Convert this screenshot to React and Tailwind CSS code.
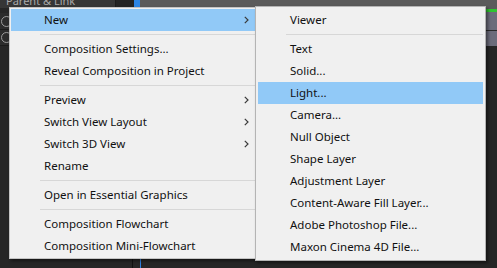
import React from 'react';

const mainItems = [
    { label: 'New', arrow: true, active: true },
    'sep',
    { label: 'Composition Settings...' },
    { label: 'Reveal Composition in Project' },
    'sep',
    { label: 'Preview', arrow: true },
    { label: 'Switch View Layout', arrow: true },
    { label: 'Switch 3D View', arrow: true },
    { label: 'Rename' },
    'sep',
    { label: 'Open in Essential Graphics' },
    'sep',
    { label: 'Composition Flowchart' },
    { label: 'Composition Mini-Flowchart' },
];

const newItems = [
    { label: 'Viewer' },
    'sep',
    { label: 'Text' },
    { label: 'Solid...' },
    { label: 'Light...', active: true },
    { label: 'Camera...' },
    { label: 'Null Object' },
    { label: 'Shape Layer' },
    { label: 'Adjustment Layer' },
    { label: 'Content-Aware Fill Layer...' },
    { label: 'Adobe Photoshop File...' },
    { label: 'Maxon Cinema 4D File...' },
];

const Chevron = () => (
    <svg width="5" height="8" viewBox="0 0 5 8" className="absolute right-[6px] top-[7px]">
        <path d="M0.8 0.8 L4 4 L0.8 7.2" fill="none" stroke="#3a3a3a" strokeWidth="1.2" />
    </svg>
);

const MenuList = ({ items, indent, sepIndent }) => (
    <>
        {items.map((item, i) =>
            item === 'sep' ? (
                <div key={i} className="h-[7px] flex items-center">
                    <div className="h-px w-full bg-[#d7d7d7]" style={{ marginLeft: sepIndent }} />
                </div>
            ) : (
                <div
                    key={i}
                    className={`relative h-[22px] flex items-center text-[#111] ${item.active ? 'bg-[#91c9f7]' : ''}`}
                    style={{ paddingLeft: indent }}
                >
                    <span>{item.label}</span>
                    {item.arrow && <Chevron />}
                </div>
            )
        )}
    </>
);

const GutterIcon = () => (
    <div className="w-[11px] h-[11px] rounded-full border-[1.5px] border-[#9b9b9b] ml-[1px] shrink-0" />
);

export default function App() {
    return (
        <div className="relative w-[497px] h-[268px] overflow-hidden bg-[#262626] font-['Noto_Sans',sans-serif] text-[11.5px]">
            {/* panel behind the menu */}
            <div className="flex h-[8px]">
                <div className="w-[115px] bg-[#363636] overflow-hidden">
                    <div className="pl-[6px] -mt-[6px] text-[11px] leading-[14px] text-[#a9a9a9]">Parent &amp; Link</div>
                </div>
                <div className="w-px bg-[#1c1c1c]" />
                <div className="w-[18px] bg-[#242424]" />
                <div className="w-[6px] bg-[#2d86e6]" />
                <div className="flex-1 bg-[#5b5b5b]" />
            </div>
            <div className="flex h-[260px]">
                <div className="w-[9px] flex flex-col">
                    <div className="h-[5px]" />
                    <div className="h-[17px] bg-[#2c2c2c] flex items-center border-b border-[#1b1b1b]">
                        <GutterIcon />
                    </div>
                    <div className="h-[16px] bg-[#2c2c2c] flex items-center border-b border-[#1b1b1b]">
                        <GutterIcon />
                    </div>
                </div>
                <div className="w-[123px]" />
                <div className="w-px bg-[#111]" />
                <div className="w-[7px]" />
                <div className="w-px bg-[#2f80e0]" />
                <div className="flex-1" />
                <div className="w-[11px] flex flex-col">
                    <div className="h-[1px] bg-[#5b5b5b]" />
                    <div className="h-[3px] bg-[#2fc52f]" />
                    <div className="h-[18px] bg-[#6c6c7b]" />
                    <div className="h-px bg-[#2a2a2a]" />
                    <div className="h-[15px] bg-[#6c6c7b]" />
                </div>
            </div>

            {/* context menu */}
            <div className="absolute left-[9px] top-[7px] w-[248px] p-px bg-[#f0f0f0] border border-[#c4c4c4] shadow-[2px_2px_3px_rgba(0,0,0,0.45)]">
                <MenuList items={mainItems} indent={33} sepIndent={29} />
            </div>

            {/* New submenu */}
            <div className="absolute left-[255px] top-[6px] w-[231px] p-[2px] bg-[#f0f0f0] border border-[#b4b4b4] shadow-[2px_2px_3px_rgba(0,0,0,0.45)]">
                <MenuList items={newItems} indent={32} sepIndent={28} />
            </div>
        </div>
    );
}
